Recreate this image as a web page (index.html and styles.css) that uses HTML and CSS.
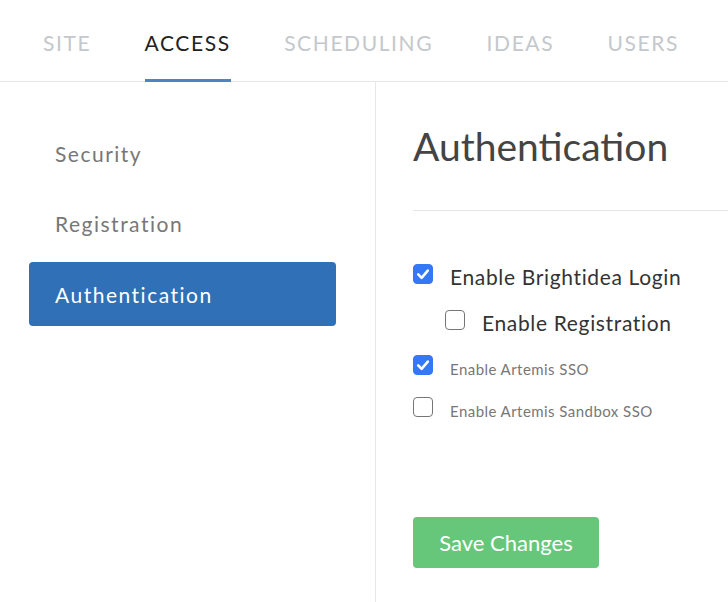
FILE: index.html
```html
<!DOCTYPE html>
<html>
<head>
<meta charset="utf-8">
<link rel="stylesheet" href="styles.css">
</head>
<body>
<nav class="tabs">
  <div class="tab">SITE</div>
  <div class="tab active">ACCESS</div>
  <div class="tab">SCHEDULING</div>
  <div class="tab">IDEAS</div>
  <div class="tab">USERS</div>
</nav>
<div class="main">
  <aside class="sidebar">
    <div class="side-item">Security</div>
    <div class="side-item">Registration</div>
    <div class="side-item active">Authentication</div>
  </aside>
  <section class="content">
    <h1 class="title">Authentication</h1>
    <div class="rule"></div>
    <div class="options">
      <div class="opt big">
        <span class="cb checked"><svg viewBox="0 0 20 20" width="20" height="20"><path d="M5.2 10.4 L8.6 13.8 L14.8 6.6" fill="none" stroke="#fff" stroke-width="2.6" stroke-linecap="round" stroke-linejoin="round"/></svg></span>
        <span class="label">Enable Brightidea Login</span>
      </div>
      <div class="opt big sub">
        <span class="cb"></span>
        <span class="label">Enable Registration</span>
      </div>
      <div class="opt small">
        <span class="cb checked"><svg viewBox="0 0 20 20" width="20" height="20"><path d="M5.2 10.4 L8.6 13.8 L14.8 6.6" fill="none" stroke="#fff" stroke-width="2.6" stroke-linecap="round" stroke-linejoin="round"/></svg></span>
        <span class="label">Enable Artemis SSO</span>
      </div>
      <div class="opt small last">
        <span class="cb"></span>
        <span class="label">Enable Artemis Sandbox SSO</span>
      </div>
    </div>
    <button class="save">Save Changes</button>
  </section>
</div>
</body>
</html>
```

FILE: styles.css
```css
* { box-sizing: border-box; }
html, body { margin: 0; padding: 0; background: #fff; }
body {
  font-family: Lato, "Open Sans", sans-serif;
  width: 728px;
  height: 602px;
  overflow: hidden;
}
.tabs {
  display: flex;
  gap: 55px;
  padding-left: 43px;
  height: 82px;
  border-bottom: 1px solid #e6e7e9;
}
.tab {
  height: 82px;
  margin-bottom: -1px;
  padding-top: 31px;
  font-size: 21px;
  line-height: 24px;
  letter-spacing: 1.6px;
  color: #c4c8cc;
  border-bottom: 3px solid transparent;
  margin-right: -1.6px;
}
.tab.active {
  color: #222;
  border-bottom-color: #4a86c6;
}
.main {
  display: flex;
  height: 520px;
}
.sidebar {
  width: 376px;
  border-right: 1px solid #e6e7e9;
  padding: 39px 0 0 29px;
  display: flex;
  flex-direction: column;
  gap: 6.5px;
}
.side-item {
  width: 307px;
  height: 64px;
  padding-left: 26px;
  display: flex;
  align-items: center;
  font-size: 21px;
  letter-spacing: 1.5px;
  color: #777;
  border-radius: 4px;
}
.side-item.active {
  background: #2f70b7;
  color: #fff;
}
.content {
  flex: 1;
  padding: 40px 0 0 37px;
}
.title {
  margin: 0;
  font-size: 39px;
  line-height: 48px;
  font-weight: 400;
  color: #444;
}
.rule {
  margin-top: 40px;
  border-top: 1px solid #e6e7e9;
}
.options {
  padding-top: 53px;
}
.opt {
  display: flex;
  align-items: flex-start;
  gap: 17px;
}
.opt.sub {
  margin-top: 21px;
  padding-left: 32px;
}
.opt.small { margin-top: 20px; }
.opt.small.last { margin-top: 18px; }
.cb {
  width: 20px;
  height: 20px;
  flex: none;
  border: 1px solid #767676;
  border-radius: 4px;
  background: #fff;
  display: block;
}
.cb svg { display: block; margin: -1px; }
.cb.checked {
  background: #3478f6;
  border-color: #3478f6;
}
.big .label {
  font-size: 21px;
  line-height: 24px;
  padding-top: 1px;
  letter-spacing: 0.65px;
  color: #333;
}
.small .label {
  font-size: 15px;
  line-height: 20px;
  padding-top: 4px;
  letter-spacing: 0.45px;
  color: #777;
}
.save {
  margin-top: 96px;
  width: 186px;
  height: 51px;
  border: none;
  border-radius: 4px;
  background: #66c77a;
  color: #fff;
  font-family: Lato, "Open Sans", sans-serif;
  font-size: 22px;
  padding: 0;
}
```
